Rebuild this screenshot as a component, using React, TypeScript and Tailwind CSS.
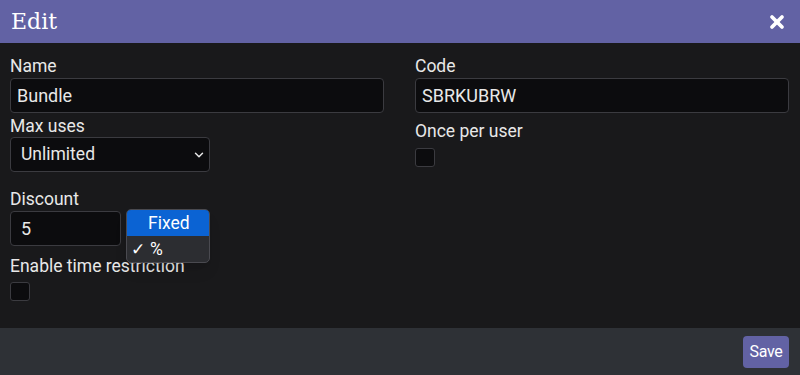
import { X, ChevronDown } from 'lucide-react';

function App() {
  return (
    <div className="w-[800px] h-[375px] flex flex-col bg-[#19191b] text-[#e8e8e8]" style={{ fontFamily: 'Roboto, "Open Sans", sans-serif' }}>
      {/* header */}
      <div className="h-[43px] bg-[#6262a4] flex items-center justify-between px-[11px]">
        <h1 className="text-[22px] text-white" style={{ fontFamily: '"DejaVu Serif", "Liberation Serif", serif' }}>Edit</h1>
        <X size={20} strokeWidth={4.5} className="text-white mr-[2px]" />
      </div>

      {/* body */}
      <div className="flex-1 flex gap-[31px] px-[10px] pt-[12px]">
        <div className="w-[374px] flex flex-col text-[17.5px]">
          <label className="leading-[22px]">Name</label>
          <div className="h-[35px] mt-[1px] border border-[#3b3b40] rounded-[4px] bg-[#0c0c0e] flex items-center px-[6px] text-[18px]">
            Bundle
          </div>
          <label className="leading-[22px] mt-[2px]">Max uses</label>
          <div className="w-[200px] h-[35px] border border-[#3b3b40] rounded-[4px] bg-[#0c0c0e] flex items-center justify-between pl-[10px] pr-[3px] text-[17.5px]">
            Unlimited
            <ChevronDown size={14} strokeWidth={2.5} />
          </div>
          <label className="leading-[22px] mt-[16px]">Discount</label>
          <div className="relative mt-[1px]">
            <div className="w-[111px] h-[35px] border border-[#3b3b40] rounded-[4px] bg-[#0c0c0e] flex items-center px-[10px] text-[18px]">
              5
            </div>
            {/* open select menu */}
            <div className="absolute left-[116px] -top-[2px] w-[84px] rounded-[5px] border border-[#4a4a50] bg-[#2c2d31] overflow-hidden text-[17.5px] shadow-lg z-10">
              <div className="h-[26px] bg-[#0b63d3] text-white flex items-center pl-[21px]">Fixed</div>
              <div className="h-[26px] flex items-center pl-[4px] gap-[5px] text-white">
                <span className="text-[17px] leading-none">✓</span>
                <span>%</span>
              </div>
            </div>
          </div>
          <label className="leading-[22px] mt-[9px]">Enable time restriction</label>
          <div className="w-[20px] h-[19px] mt-[5px] border border-[#3b3b40] rounded-[3px] bg-[#0c0c0e]" />
        </div>
        <div className="w-[374px] flex flex-col text-[17.5px]">
          <label className="leading-[22px]">Code</label>
          <div className="h-[35px] mt-[1px] border border-[#3b3b40] rounded-[4px] bg-[#0c0c0e] flex items-center px-[6px] text-[18px]">
            SBRKUBRW
          </div>
          <label className="leading-[22px] mt-[7px]">Once per user</label>
          <div className="w-[20px] h-[19px] mt-[6px] border border-[#3b3b40] rounded-[3px] bg-[#0c0c0e]" />
        </div>
      </div>

      {/* footer */}
      <div className="h-[47px] bg-[#2e3136] flex items-center justify-end px-[11px]">
        <button className="h-[32px] w-[46px] rounded-[4px] bg-[#6262a4] text-white text-[16px] tracking-[-0.3px]">
          Save
        </button>
      </div>
    </div>
  );
}

export default App;
